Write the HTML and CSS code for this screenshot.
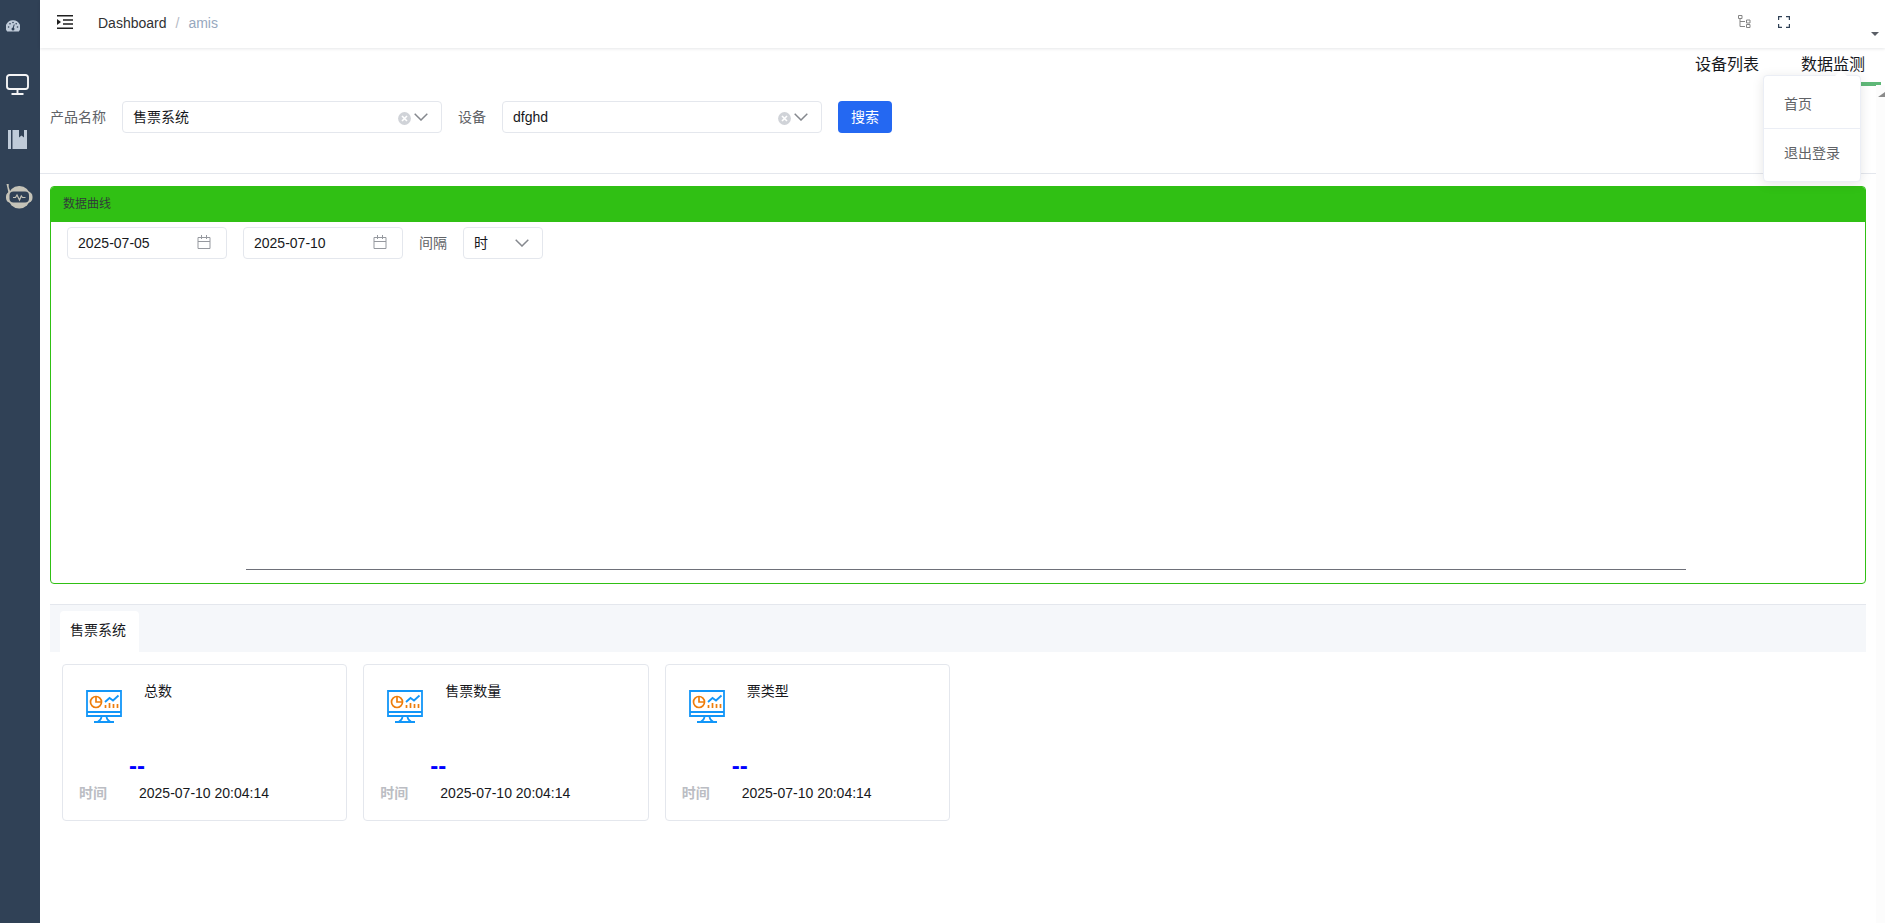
FILE: index.html
```html
<!DOCTYPE html>
<html lang="zh-CN">
<head>
<meta charset="utf-8">
<title>Dashboard</title>
<link rel="stylesheet" href="styles.css">
</head>
<body>
<svg class="defs" width="0" height="0">
  <symbol id="chevron" viewBox="0 0 14 8"><path d="M.7.8 7 7 13.3.8" fill="none" stroke="#85888e" stroke-width="1.500"/></symbol>
  <symbol id="clear" viewBox="0 0 13 13"><circle cx="6.5" cy="6.5" r="6.400" fill="#d0d3d8"/><path d="m4 4 5 5M9 4 4 9" stroke="#fff" stroke-width="1.6"/></symbol>
  <symbol id="calendar" viewBox="0 0 14 14"><path d="M1 2.5h12v11H1zM1 6.5h12M4.5 0v4M9.500 0v4" fill="none" stroke="#96999f"/></symbol>
  <symbol id="board" viewBox="0 0 36 33">
    <g fill="none" stroke="#1296f8" stroke-width="1.800"><path d="M1 1h34v25H1zM1 22h34M15.500 26c0 3-1.500 4.500-3.500 5.500M20.500 26c0 3 1.500 4.500 3.500 5.500M8 32h20"/><path d="m19 12 4.500-4 3.500 2.500L32.500 5.500"/></g>
    <g fill="none" stroke="#ee7d0b" stroke-width="1.700"><circle cx="10" cy="12" r="5.500"/><path d="M10 6.500V12h5.500M19.500 15v3M23.500 13v5M27.500 14v4M31.500 14v4"/></g>
  </symbol>
</svg>
<div class="app">
  <nav class="sidebar">
    <svg class="side-gauge" viewBox="0 0 14 12"><path d="M7 .3A7 7 0 0 0 1.200 11.600h11.600A7 7 0 0 0 7 .3z" fill="#bfcbd9"/><g fill="#304156"><circle cx="2.600" cy="7" r=".8"/><circle cx="4" cy="3.800" r=".8"/><circle cx="7" cy="2.500" r=".8"/><circle cx="10.200" cy="3.800" r=".8"/><circle cx="11.500" cy="7" r=".8"/><circle cx="7" cy="9" r="1.500"/></g><path d="M7 9 8.200 4.500" stroke="#304156"/></svg>
    <svg class="side-monitor" viewBox="0 0 23 21"><path d="M3.500 1h16a2.500 2.500 0 0 1 2.500 2.500v9a2.500 2.500 0 0 1-2.500 2.500h-16A2.500 2.500 0 0 1 1 12.500v-9A2.500 2.500 0 0 1 3.500 1zM11.500 15v5M5.500 20h12" fill="none" stroke="#f4f4f5" stroke-width="1.900"/></svg>
    <svg class="side-book" viewBox="0 0 19 19"><path d="M0 0h3v19H0zM4.500 0H11v7.500l2.500-2L16 7.500V0h3v19H4.500z" fill="#bfcbd9"/></svg>
    <svg class="side-bot" viewBox="0 0 27 26"><path d="M.5 1h2.200v3l2 6-2 1-1.500-7z" fill="#c5c3b8"/><rect x="2.500" y="3" width="21.500" height="22.500" rx="10.500" ry="10" fill="#c5c3b8"/><rect x="0" y="8.500" width="26.500" height="11.500" rx="5" fill="#c5c3b8"/><rect x="3.500" y="8.500" width="19.500" height="11" rx="4" fill="#304156"/><path d="M7 14.500h2.500l1.500-2.500 2.500 5 1.800-4 1.200 1.500H19.500" fill="none" stroke="#c5c3b8" stroke-width="1.200"/></svg>
  </nav>
  <div class="main">
    <header class="navbar">
      <svg class="fold" viewBox="0 0 16 14"><path d="M0 .7h16M6 5h10M6 9h10M0 13.300h16" stroke="#1f1f1f" stroke-width="1.400"/><path d="m0 4 4 3-4 3z" fill="#1f1f1f"/></svg>
      <div class="crumbs"><span>Dashboard</span><span class="crumb-sep">/</span><span class="crumb-last">amis</span></div>
      <div class="tools">
        <svg class="tree" viewBox="0 0 13 13"><path d="M.5.500h3.500v3H.5zM2 4v7.500h5M2 6.500h5M8.500 5h3.500v3H8.500zM8.500 9.500h3.500v3H8.500z" fill="none" stroke="#858585"/></svg>
        <svg class="full" viewBox="0 0 12 12"><path d="M.6 4V.6H4M8 .6h3.400V4M11.400 8v3.400H8M4 11.400H.6V8" fill="none" stroke="#304156" stroke-width="1.200"/></svg>
        <i class="caret"></i>
      </div>
    </header>
    <div class="page">
      <div class="page-tabs"><span>设备列表</span><span class="current">数据监测</span></div>
      <div class="page-scroll">
        <div class="content">
          <form class="search">
            <label>产品名称</label>
            <div class="field wide"><span>售票系统</span><svg class="clear"><use href="#clear"/></svg><svg class="chev"><use href="#chevron"/></svg></div>
            <label>设备</label>
            <div class="field wide"><span>dfghd</span><svg class="clear"><use href="#clear"/></svg><svg class="chev"><use href="#chevron"/></svg></div>
            <button type="button">搜索</button>
          </form>
          <section class="panel">
            <h2>数据曲线</h2>
            <div class="filters">
              <div class="field date"><span>2025-07-05</span><svg class="cal"><use href="#calendar"/></svg></div>
              <div class="field date"><span>2025-07-10</span><svg class="cal"><use href="#calendar"/></svg></div>
              <label>间隔</label>
              <div class="field unit"><span>时</span><svg class="chev"><use href="#chevron"/></svg></div>
            </div>
            <div class="chart"><div class="axis"></div></div>
          </section>
          <div class="tabbar"><div class="tab">售票系统</div></div>
          <div class="cards">
            <article class="card"><div class="top"><svg><use href="#board"/></svg><h3>总数</h3></div><div class="value">--</div><div class="time"><b>时间</b><span>2025-07-10 20:04:14</span></div></article>
            <article class="card"><div class="top"><svg><use href="#board"/></svg><h3>售票数量</h3></div><div class="value">--</div><div class="time"><b>时间</b><span>2025-07-10 20:04:14</span></div></article>
            <article class="card"><div class="top"><svg><use href="#board"/></svg><h3>票类型</h3></div><div class="value">--</div><div class="time"><b>时间</b><span>2025-07-10 20:04:14</span></div></article>
          </div>
        </div>
        <div class="scrollbar"><i></i></div>
      </div>
    </div>
  </div>
</div>
<div class="menu"><a>首页</a><a>退出登录</a></div>
</body>
</html>
```
FILE: styles.css
```css
* { box-sizing: border-box; }
body {
  margin: 0;
  height: 923px;
  overflow: hidden;
  position: relative;
  background: #fff;
  color: #17181c;
  font: 14px/20px "Liberation Sans", "Noto Sans CJK SC", sans-serif;
}
svg { display: block; flex: none; }
.defs { position: absolute; }
h2, h3 { margin: 0; font-weight: 400; }
.app { display: flex; height: 923px; }
.sidebar { width: 40px; flex: none; background: #304156; padding: 20px 0 0 6px; }
.side-gauge { width: 14px; height: 12px; }
.side-monitor { width: 23px; height: 21px; margin-top: 42px; }
.side-book { width: 19px; height: 19px; margin: 35px 0 0 2px; }
.side-bot { width: 27px; height: 26px; margin-top: 34px; }
.main { flex: 1; min-width: 0; display: flex; flex-direction: column; }
.navbar {
  height: 48px;
  flex: none;
  display: flex;
  align-items: flex-start;
  padding: 15px 6px 0 17px;
  box-shadow: 0 1px 3px rgba(0, 21, 41, .1);
}
.fold { width: 16px; height: 14px; }
.crumbs { display: flex; margin: -2px 0 0 25px; color: #303133; }
.crumb-sep { margin: 0 9px; color: #b5bac4; }
.crumb-last { color: #97a8be; }
.tools { margin-left: auto; display: flex; }
.tree { width: 13px; height: 13px; }
.full { width: 12px; height: 12px; margin: 1px 0 0 27px; }
.caret { width: 8px; height: 4px; margin: 17px 0 0 81px; border: 4px solid transparent; border-top-color: #5a5e66; border-bottom: 0; }
.page { flex: 1; display: flex; flex-direction: column; }
.page-tabs { height: 37px; display: flex; justify-content: flex-end; font-size: 16px; line-height: 34px; white-space: nowrap; }
.page-tabs span { padding: 0 20px; margin-right: 2px; }
.page-tabs .current { width: 100px; padding-right: 0; margin-right: 4px; height: 38px; border-bottom: 4px solid #5fb878; }
.page-scroll { flex: 1; display: flex; }
.content { flex: 1; min-width: 0; }
.scrollbar { width: 9px; background: #fcfcfc; padding: 7px 0 0 2px; overflow: hidden; }
.scrollbar i { display: block; width: 0; border: 7px solid transparent; border-bottom: 5px solid #8b8b8b; border-top: 0; }
.search { height: 89px; display: flex; align-items: flex-start; gap: 16px; padding: 16px 0 0 10px; border-bottom: 1px solid #e4e7ed; }
label { color: #606266; line-height: 32px; }
.field { height: 32px; border: 1px solid #e4e7ed; border-radius: 4px; display: flex; align-items: center; padding: 0 13px 0 10px; }
.field span { flex: 1; }
.wide { width: 320px; }
.clear { width: 13px; height: 13px; margin: 3px 3px 0 0; }
.chev { width: 14px; height: 8px; margin-top: -1px; }
button { width: 54px; height: 32px; padding: 0; border: 0; border-radius: 4px; background: #2468f2; color: #fff; font: inherit; }
.panel { margin: 12px 10px 0; height: 398px; border: 1px solid #30c014; border-radius: 4px; overflow: hidden; }
.panel h2 { height: 35px; background: #30c014; color: #303c3a; padding-left: 12px; font-size: 12px; line-height: 35px; }
.filters { display: flex; gap: 16px; padding: 5px 0 0 16px; }
.date { width: 160px; padding-right: 15px; }
.cal { width: 14px; height: 14px; margin-top: -2px; }
.unit { width: 80px; }
.chart { padding: 310px 0 0 195px; }
.axis { width: 1440px; height: 1px; background: #6e7079; }
.tabbar { margin: 20px 10px 0; height: 48px; padding: 6px 10px 0; border-top: 1px solid #e4e7ed; background: #f5f7fa; }
.tab { width: 79px; height: 41px; padding-left: 10px; line-height: 39px; background: #fff; border-radius: 4px 4px 0 0; }
.cards { display: flex; gap: 16px; padding: 12px 0 0 22px; }
.card { width: 285.330px; height: 157px; padding: 16px; border: 1px solid #e4e7ed; border-radius: 4px; }
.top { display: flex; height: 74px; padding-left: 7px; }
.top svg { width: 36px; height: 33px; margin-top: 9px; }
.top h3 { margin-left: 22px; font-size: 14px; }
.value { height: 22px; padding-left: 50px; font: bold 24px/22px "Liberation Sans", sans-serif; color: #00f; }
.time { display: flex; margin-top: 6px; }
.time b { width: 60px; color: #bbbdc3; }
.menu { position: absolute; left: 1763px; top: 75px; width: 98px; height: 107px; padding-top: 4px; background: #fff; border: 1px solid #ebeef5; border-radius: 4px; box-shadow: 0 2px 12px rgba(0, 0, 0, .1); color: #606266; }
.menu::before { content: ""; position: absolute; left: 71px; top: -6px; border: 6px solid transparent; border-top: 0; border-bottom-color: #fff; }
.menu a { display: block; height: 49px; padding-left: 20px; line-height: 49px; }
.menu a:first-child { border-bottom: 1px solid #ebeef5; }
```
